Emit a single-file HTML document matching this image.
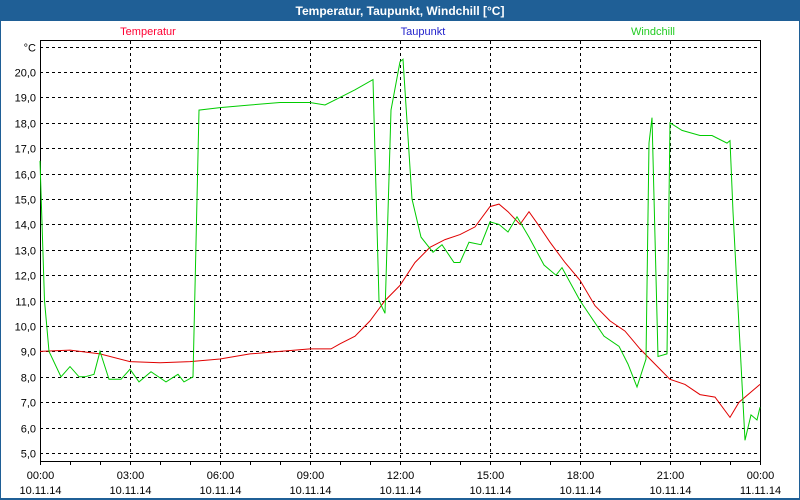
<!DOCTYPE html>
<html><head><meta charset="utf-8"><style>
html,body{margin:0;padding:0;width:800px;height:500px;overflow:hidden;background:#fff;font-family:"Liberation Sans",sans-serif}
</style></head><body>
<svg id="s" width="800" height="500" xmlns="http://www.w3.org/2000/svg" font-family="Liberation Sans, sans-serif">
<rect x="0" y="0" width="800" height="500" fill="#fff"/>
<rect x="0" y="0" width="800" height="21" fill="#1f5f96"/>
<rect x="0" y="0" width="1" height="500" fill="#1f5f96"/>
<rect x="799" y="0" width="1" height="500" fill="#1f5f96"/>
<rect x="0" y="498" width="800" height="2" fill="#1f5f96"/>
<text x="400" y="15" fill="#fff" font-size="12" font-weight="bold" text-anchor="middle">Temperatur, Taupunkt, Windchill [°C]</text>
<text x="148" y="35" fill="#ff0033" font-size="11" text-anchor="middle">Temperatur</text>
<text x="423" y="35" fill="#2222cc" font-size="11" text-anchor="middle">Taupunkt</text>
<text x="653" y="35" fill="#22cc22" font-size="11" text-anchor="middle">Windchill</text>
<g id="grid"></g>
<rect x="40.5" y="40.5" width="720" height="421" fill="none" stroke="#000" stroke-width="1"/>
<polyline id="red" fill="none" stroke="#e00000" stroke-width="1"/>
<polyline id="grn" fill="none" stroke="#00cc00" stroke-width="1"/>
</svg>
<script>
var Y=function(v){return 72+(20-v)*25.4},X=function(t){return 40+30*t};
var g=document.getElementById('grid'),h='';
for(var v=5;v<=21;v++){var y=Math.round(Y(v))+.5;h+='<line x1="40" x2="760" y1="'+y+'" y2="'+y+'" stroke="#000" stroke-dasharray="3,3"/>';
h+='<text x="36" y="'+(y+4)+'" font-size="11" text-anchor="end">'+(v==21?'°C':v+',0')+'</text>';}
for(var t=0;t<=24;t++){var x=X(t)+.5;h+='<line x1="'+x+'" x2="'+x+'" y1="461" y2="465" stroke="#000"/>';
if(t%3==0){if(t>0&&t<24)h+='<line x1="'+x+'" x2="'+x+'" y1="41" y2="461" stroke="#000" stroke-dasharray="3,3"/>';
var hh=(t==24?0:t);h+='<text x="'+x+'" y="479" font-size="11" text-anchor="middle">'+(hh<10?'0':'')+hh+':00</text>';
h+='<text x="'+x+'" y="494" font-size="11" text-anchor="middle">'+(t==24?'11.11.14':'10.11.14')+'</text>';}}
g.innerHTML=h;
function pl(id,a){var s='';for(var i=0;i<a.length;i+=2)s+=X(a[i]).toFixed(1)+','+Y(a[i+1]).toFixed(1)+' ';document.getElementById(id).setAttribute('points',s);}
pl('red',[0,9.0,1,9.05,2,8.9,3,8.6,4,8.55,5,8.6,6,8.7,7,8.9,8,9.0,9,9.1,9.7,9.1,10,9.3,10.5,9.6,11,10.2,11.5,11.0,12,11.6,12.5,12.5,13,13.1,13.5,13.4,14,13.6,14.5,13.9,15,14.7,15.3,14.8,15.6,14.5,16,14.0,16.3,14.5,16.6,14.0,17,13.3,17.5,12.5,18,11.8,18.5,10.8,19,10.2,19.5,9.8,20,9.1,20.5,8.5,21,7.9,21.5,7.7,22,7.3,22.5,7.2,23,6.4,23.3,7.0,24,7.7]);
pl('grn',[0,16.5,0.15,11,0.3,9,0.7,8.0,1,8.4,1.3,8.0,1.5,8.0,1.8,8.1,2,9.0,2.3,7.9,2.7,7.9,3,8.3,3.3,7.8,3.7,8.2,4.2,7.8,4.6,8.1,4.8,7.8,5.1,8.0,5.3,18.5,6,18.6,7,18.7,8,18.8,9,18.8,9.5,18.7,10,19.0,10.5,19.3,11.1,19.7,11.3,11.0,11.5,10.5,11.7,18.5,12.0,20.4,12.1,20.5,12.4,15.0,12.7,13.5,13.1,12.9,13.4,13.2,13.8,12.5,14.0,12.5,14.3,13.3,14.7,13.2,15.0,14.1,15.3,14.0,15.6,13.7,15.9,14.3,16.3,13.5,16.8,12.4,17.2,12.0,17.4,12.3,18.0,11.0,18.8,9.6,19.3,9.2,19.6,8.5,19.9,7.6,20.2,8.7,20.3,17.2,20.4,18.2,20.6,8.8,20.9,8.9,21.0,18.0,21.4,17.7,22.0,17.5,22.4,17.5,22.9,17.2,23.0,17.3,23.1,14.5,23.5,5.5,23.7,6.5,23.9,6.3,24,6.8]);
</script>
</body></html>
